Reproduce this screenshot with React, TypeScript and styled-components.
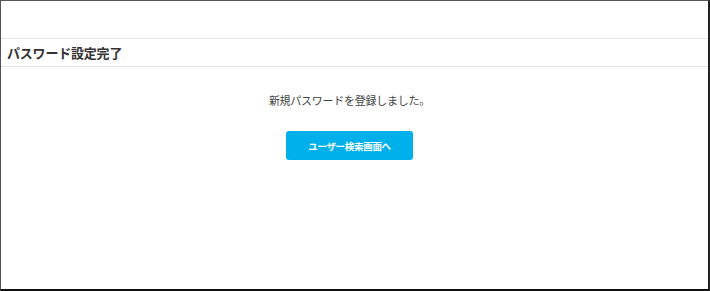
import React from 'react';
import styled, { createGlobalStyle } from 'styled-components';

const GlobalStyle = createGlobalStyle`
  html, body {
    margin: 0;
    padding: 0;
    background: #fff;
  }
  body {
    font-family: "Noto Sans CJK JP", "Noto Sans", sans-serif;
    color: #333;
  }
`;

const Frame = styled.div`
  box-sizing: border-box;
  width: 710px;
  height: 291px;
  border-top: 1px solid #555;
  border-left: 1px solid #555;
  border-right: 2px solid #222;
  border-bottom: 2px solid #111;
  display: flex;
  flex-direction: column;
`;

const TopBand = styled.div`
  height: 37px;
  border-bottom: 1px solid #e6e6e6;
`;

const TitleRow = styled.div`
  height: 27px;
  border-bottom: 1px solid #e6e6e6;
  display: flex;
  align-items: center;
  padding-left: 6px;
`;

const Title = styled.h1`
  margin: 0;
  font-size: 13px;
  font-weight: bold;
  color: #333;
  letter-spacing: -0.2px;
`;

const Body = styled.div`
  display: flex;
  flex-direction: column;
  align-items: center;
  padding: 24px 10px 0 0;
`;

const Message = styled.p`
  margin: 0;
  font-size: 11px;
  line-height: 18px;
  color: #444;
  letter-spacing: -0.25px;
`;

const ActionButton = styled.button`
  margin-top: 22px;
  width: 127px;
  height: 29px;
  border: none;
  border-radius: 3px;
  background: #00b0ea;
  color: #fff;
  font-family: inherit;
  font-size: 9.5px;
  font-weight: bold;
  letter-spacing: -0.3px;
  cursor: pointer;
`;

const App = () => (
  <>
    <GlobalStyle />
    <Frame>
      <TopBand />
      <TitleRow>
        <Title>パスワード設定完了</Title>
      </TitleRow>
      <Body>
        <Message>新規パスワードを登録しました。</Message>
        <ActionButton>ユーザー検索画面へ</ActionButton>
      </Body>
    </Frame>
  </>
);

export default App;
